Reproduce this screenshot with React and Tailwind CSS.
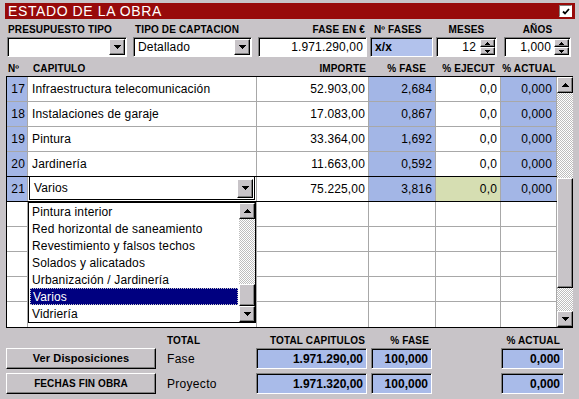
import React from "react";

const RAISED =
  "border border-t-white border-l-white border-r-black border-b-black shadow-[inset_-1px_-1px_0_#808080] bg-[#c8c4c8]";
const SUNKEN =
  "border border-t-[#808080] border-l-[#808080] border-r-white border-b-white shadow-[inset_1px_1px_0_#000]";
const CHECKER =
  "bg-[repeating-conic-gradient(#ffffff_0%_25%,#bdbdbd_0%_50%)] bg-size-[2px_2px]";

const rows = [
  { n: 17, cap: "Infraestructura telecomunicación", imp: "52.903,00", fase: "2,684", ejec: "0,0", act: "0,000" },
  { n: 18, cap: "Instalaciones de garaje", imp: "17.083,00", fase: "0,867", ejec: "0,0", act: "0,000" },
  { n: 19, cap: "Pintura", imp: "33.364,00", fase: "1,692", ejec: "0,0", act: "0,000" },
  { n: 20, cap: "Jardinería", imp: "11.663,00", fase: "0,592", ejec: "0,0", act: "0,000" },
];

const listItems = [
  "Pintura interior",
  "Red horizontal de saneamiento",
  "Revestimiento y falsos techos",
  "Solados y alicatados",
  "Urbanización / Jardinería",
  "Varios",
  "Vidriería",
];

function Tri({ up, w = 7, h = 4 }) {
  const pts = up ? `${w / 2},0 ${w},${h} 0,${h}` : `0,0 ${w},0 ${w / 2},${h}`;
  return (
    <svg width={w} height={h} viewBox={`0 0 ${w} ${h}`} shapeRendering="crispEdges">
      <polygon points={pts} fill="#000" />
    </svg>
  );
}

function DropBtn({ h = "h-[16px]" }) {
  return (
    <div className={`${RAISED} w-[16px] ${h} flex items-center justify-center`}>
      <Tri />
    </div>
  );
}

function Spinner() {
  return (
    <div className="flex flex-col w-[15px] h-[16px]">
      <div className={`${RAISED} h-[8px] flex items-center justify-center`}>
        <Tri up w={5} h={3} />
      </div>
      <div className={`${RAISED} h-[8px] flex items-center justify-center`}>
        <Tri w={5} h={3} />
      </div>
    </div>
  );
}

function ScrollBtn({ up }) {
  return (
    <div className={`${RAISED} h-[16px] flex items-center justify-center shrink-0`}>
      <Tri up={up} />
    </div>
  );
}

const COLS = "grid grid-cols-[21px_229px_112px_67px_65px_56px]";
const CELL = "border-r border-[#a8a8a8] flex items-center";

function App() {
  return (
    <div className="w-[579px] h-[399px] bg-[#c8c4c8] font-['Liberation_Sans',Arial,sans-serif] text-black overflow-hidden select-none">
      {/* title bar */}
      <div className="ml-[5px] mr-[4px] mt-[3px] h-[16px] bg-[#980a0a] flex items-center justify-between pl-[3px] pr-[3px]">
        <span className="text-white text-[14px] leading-none tracking-[0.6px]">ESTADO DE LA OBRA</span>
        <div className="w-[13px] h-[12px] bg-white border border-t-[#808080] border-l-[#808080] border-b-white border-r-white flex items-center justify-center">
          <svg width="8" height="7" viewBox="0 0 8 7">
            <polyline points="1,3.5 3,5.5 7,1" fill="none" stroke="#000" strokeWidth="1.8" />
          </svg>
        </div>
      </div>

      {/* field labels */}
      <div className="flex h-[18px] items-end pb-[2px] pl-[7px] text-[10px] font-bold leading-[11px] tracking-[0.15px]">
        <div className="w-[120px] pl-[1px]">PRESUPUESTO TIPO</div>
        <div className="w-[119px] ml-[6px] pl-[2px]">TIPO DE CAPTACION</div>
        <div className="w-[109px] ml-[6px] text-right pr-[2px]">FASE EN €</div>
        <div className="w-[63px] ml-[3px] pl-[4px]">Nº FASES</div>
        <div className="w-[61px] ml-[3px] text-center">MESES</div>
        <div className="w-[67px] ml-[7px] text-center">AÑOS</div>
      </div>

      {/* inputs */}
      <div className="flex h-[20px] pl-[7px] text-[12px] tracking-[0.15px]">
        <div className={`${SUNKEN} w-[120px] bg-white flex items-center justify-end pr-[1px]`}>
          <DropBtn />
        </div>
        <div className={`${SUNKEN} w-[119px] ml-[6px] bg-white flex items-center justify-between pl-[4px] pr-[1px]`}>
          <span>Detallado</span>
          <DropBtn />
        </div>
        <div className={`${SUNKEN} w-[109px] ml-[6px] bg-white flex items-center justify-end pr-[3px]`}>
          1.971.290,00
        </div>
        <div className={`${SUNKEN} w-[63px] ml-[3px] bg-[#b2c2ec] flex items-center pl-[4px] font-bold`}>
          x/x
        </div>
        <div className={`${SUNKEN} w-[61px] ml-[3px] bg-white flex items-center justify-end gap-[4px] pr-[1px]`}>
          <span>12</span>
          <Spinner />
        </div>
        <div className={`${SUNKEN} w-[67px] ml-[7px] bg-white flex items-center justify-end gap-[3px] pr-[1px]`}>
          <span>1,000</span>
          <Spinner />
        </div>
      </div>

      {/* column headers */}
      <div className={`${COLS} h-[19px] pl-[7px] items-end pb-[2px] text-[10px] font-bold leading-[11px] tracking-[0.15px]`}>
        <div className="pl-[1px]">Nº</div>
        <div className="pl-[5px]">CAPITULO</div>
        <div className="text-right pr-[3px]">IMPORTE</div>
        <div className="text-right pr-[10px]">% FASE</div>
        <div className="text-center">% EJECUT</div>
        <div className="text-center whitespace-nowrap">% ACTUAL</div>
      </div>

      {/* table */}
      <div className="relative ml-[6px] w-[567px] flex border-l border-t border-b border-black text-[12px] tracking-[0.15px]">
        <div className="w-[550px] flex flex-col">
          {rows.map((r, i) => (
            <div
              key={r.n}
              className={`${COLS} h-[25px] bg-white border-b ${i === 3 ? "border-black" : "border-[#a8a8a8]"}`}
            >
              <div className={`${CELL} bg-[#a3b6e6] justify-end pr-[2px]`}>{r.n}</div>
              <div className={`${CELL} pl-[4px]`}>{r.cap}</div>
              <div className={`${CELL} justify-end pr-[3px]`}>{r.imp}</div>
              <div className={`${CELL} bg-[#a3b6e6] justify-end pr-[3px]`}>{r.fase}</div>
              <div className={`${CELL} justify-end pr-[3px]`}>{r.ejec}</div>
              <div className={`${CELL} bg-[#a3b6e6] justify-end pr-[4px]`}>{r.act}</div>
            </div>
          ))}

          {/* current record */}
          <div className={`${COLS} h-[25px] bg-white border-b border-black`}>
            <div className={`${CELL} bg-[#a3b6e6] justify-end pr-[2px]`}>21</div>
            <div className="border-r border-[#a8a8a8] flex items-start">
              <div className="ml-[1px] w-[226px] h-[23px] border border-t-0 border-black bg-white flex items-center justify-between pl-[4px] pr-[1px]">
                <span>Varios</span>
                <DropBtn h="h-[19px]" />
              </div>
            </div>
            <div className={`${CELL} justify-end pr-[3px]`}>75.225,00</div>
            <div className={`${CELL} bg-[#a3b6e6] justify-end pr-[3px]`}>3,816</div>
            <div className={`${CELL} bg-[#d6deb2] justify-end pr-[3px]`}>0,0</div>
            <div className={`${CELL} bg-[#a3b6e6] justify-end pr-[4px]`}>0,000</div>
          </div>

          {[0, 1, 2, 3, 4].map((k) => (
            <div key={k} className={`${COLS} h-[25px] bg-white ${k < 4 ? "border-b border-[#a8a8a8]" : ""}`}>
              <div className={CELL} />
              <div className={CELL} />
              <div className={CELL} />
              <div className={CELL} />
              <div className={CELL} />
              <div className={CELL} />
            </div>
          ))}
        </div>

        {/* vertical scrollbar */}
        <div className="w-[16px] flex flex-col">
          <ScrollBtn up />
          <div className={`h-[85px] ${CHECKER}`} />
          <div className={`${RAISED} h-[110px]`} />
          <div className={`flex-1 ${CHECKER}`} />
          <ScrollBtn />
        </div>

        {/* open combo list */}
        <div className="absolute left-[21px] top-[125px] w-[228px] h-[121px] border border-black bg-white flex">
          <div className="flex-1 flex flex-col">
            {listItems.map((t) => (
              <div
                key={t}
                className={`h-[17px] flex items-center ${
                  t === "Varios"
                    ? "mx-[1px] pl-[2px] bg-[#000080] text-white border border-dotted border-[#c8c8c8]"
                    : "pl-[3px]"
                }`}
              >
                {t}
              </div>
            ))}
          </div>
          <div className="w-[16px] flex flex-col">
            <ScrollBtn up />
            <div className={`flex-1 ${CHECKER}`} />
            <div className={`${RAISED} h-[22px]`} />
            <ScrollBtn />
          </div>
        </div>
      </div>

      {/* totals header */}
      <div className="flex h-[20px] items-end pb-[2px] pl-[6px] text-[10px] font-bold leading-[11px] tracking-[0.15px]">
        <div className="w-[150px]" />
        <div className="w-[89px] ml-[11px]">TOTAL</div>
        <div className="w-[111px] text-right pr-[2px]">TOTAL CAPITULOS</div>
        <div className="w-[61px] ml-[4px] text-right pr-[3px]">% FASE</div>
        <div className="w-[63px] ml-[69px] text-right pr-[4px] whitespace-nowrap">% ACTUAL</div>
      </div>

      {[
        { btn: "Ver Disposiciones", size: "text-[11px]", label: "Fase", total: "1.971.290,00" },
        { btn: "FECHAS FIN OBRA", size: "text-[10px]", label: "Proyecto", total: "1.971.320,00" },
      ].map((f, i) => (
        <div key={f.btn} className={`flex h-[21px] pl-[6px] ${i ? "mt-[4px]" : ""}`}>
          <button className={`${RAISED} w-[150px] flex items-center justify-center font-bold ${f.size} tracking-[0.1px]`}>
            {f.btn}
          </button>
          <div className="w-[89px] ml-[11px] flex items-center text-[12px] tracking-[0.3px]">{f.label}</div>
          <div className={`${SUNKEN} w-[111px] bg-[#a9bbe9] flex items-center justify-end pr-[3px] font-bold text-[12px]`}>
            {f.total}
          </div>
          <div className={`${SUNKEN} w-[61px] ml-[4px] bg-[#a9bbe9] flex items-center justify-end pr-[3px] font-bold text-[12px]`}>
            100,000
          </div>
          <div className={`${SUNKEN} w-[63px] ml-[69px] bg-[#a9bbe9] flex items-center justify-end pr-[3px] font-bold text-[12px]`}>
            0,000
          </div>
        </div>
      ))}
    </div>
  );
}

export default App;
